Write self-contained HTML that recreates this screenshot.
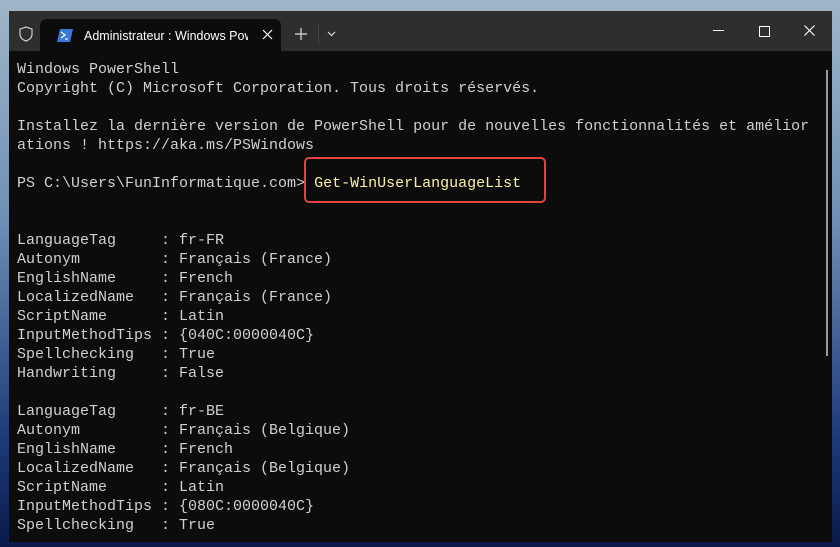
<!DOCTYPE html>
<html><head><meta charset="utf-8"><style>
html,body{margin:0;padding:0}
body{width:840px;height:547px;overflow:hidden;position:relative;background:linear-gradient(180deg,#9fb6c8 0%,#6f8fb5 40%,#1d3a7a 80%,#0b1a4a 100%);font-family:"Liberation Sans",sans-serif}
.win{position:absolute;left:9px;top:11px;width:823px;height:531px;background:#0c0c0c;overflow:hidden}
.bar{position:absolute;left:0;top:0;width:823px;height:40px;background:#2e2e2e}
.tab{position:absolute;left:31px;top:8px;width:241px;height:32px;background:#0c0c0c;border-radius:7px 7px 0 0}
.t{position:absolute;color:#fff;font-size:12px}
.term{position:absolute;left:8px;top:49px;font-family:"Liberation Mono",monospace;font-size:15px;line-height:19px;color:#d0d0d0;white-space:pre}
.y{color:#f9f1a5}
.box{position:absolute;left:295px;top:146px;width:238px;height:42px;border:2px solid #e0443a;border-radius:5px}
.sb{position:absolute;left:817px;top:59px;width:2px;height:286px;background:#9a9a9a}
</style></head><body>
<div class="win">
<div class="bar">
<svg style="position:absolute;left:10px;top:15px" width="14" height="16" viewBox="0 0 14 16"><path d="M7 1 L13 3 V8 C13 12 10 14 7 15 C4 14 1 12 1 8 V3 Z" fill="none" stroke="#ccc" stroke-width="1.2"/></svg>
<div class="tab">
<svg style="position:absolute;left:17px;top:10px" width="16" height="13" viewBox="0 0 16 13"><path d="M3 0 H16 L13 13 H0 Z" fill="#3a78d6"/><path d="M4 3 L8 6 L4 9" fill="none" stroke="#fff" stroke-width="1.3"/><path d="M8 10 H11" stroke="#fff" stroke-width="1.2"/></svg>
<div class="t" style="left:44px;top:10px;font-size:12.5px;width:164px;overflow:hidden;white-space:nowrap">Administrateur : Windows PowerShell</div>
<svg style="position:absolute;left:222px;top:10px" width="11" height="11" viewBox="0 0 11 11"><path d="M1 1 L10 10 M10 1 L1 10" stroke="#fff" stroke-width="1.2"/></svg>
</div>
<svg style="position:absolute;left:286px;top:17px" width="12" height="12" viewBox="0 0 12 12"><path d="M6 0 V12 M0 6 H12" stroke="#ddd" stroke-width="1.2"/></svg>
<div style="position:absolute;left:309px;top:13px;width:1px;height:20px;background:#444"></div>
<svg style="position:absolute;left:318px;top:20px" width="9" height="6" viewBox="0 0 9 6"><path d="M1 1 L4.5 4.5 L8 1" fill="none" stroke="#ddd" stroke-width="1.2"/></svg>
<div style="position:absolute;left:704px;top:19px;width:11px;height:1px;background:#fff"></div>
<div style="position:absolute;left:750px;top:15px;width:9px;height:9px;border:1px solid #fff"></div>
<svg style="position:absolute;left:795px;top:14px" width="11" height="11" viewBox="0 0 11 11"><path d="M0.5 0.5 L10.5 10.5 M10.5 0.5 L0.5 10.5" stroke="#fff" stroke-width="1.1"/></svg>
</div>
<div class="term">Windows PowerShell
Copyright (C) Microsoft Corporation. Tous droits réservés.

Installez la dernière version de PowerShell pour de nouvelles fonctionnalités et amélior
ations ! https://aka.ms/PSWindows

PS C:\Users\FunInformatique.com> <span class="y">Get-WinUserLanguageList</span>


LanguageTag     : fr-FR
Autonym         : Français (France)
EnglishName     : French
LocalizedName   : Français (France)
ScriptName      : Latin
InputMethodTips : {040C:0000040C}
Spellchecking   : True
Handwriting     : False

LanguageTag     : fr-BE
Autonym         : Français (Belgique)
EnglishName     : French
LocalizedName   : Français (Belgique)
ScriptName      : Latin
InputMethodTips : {080C:0000040C}
Spellchecking   : True</div>
<div class="box"></div>
<div class="sb"></div>
</div>
</body></html>
